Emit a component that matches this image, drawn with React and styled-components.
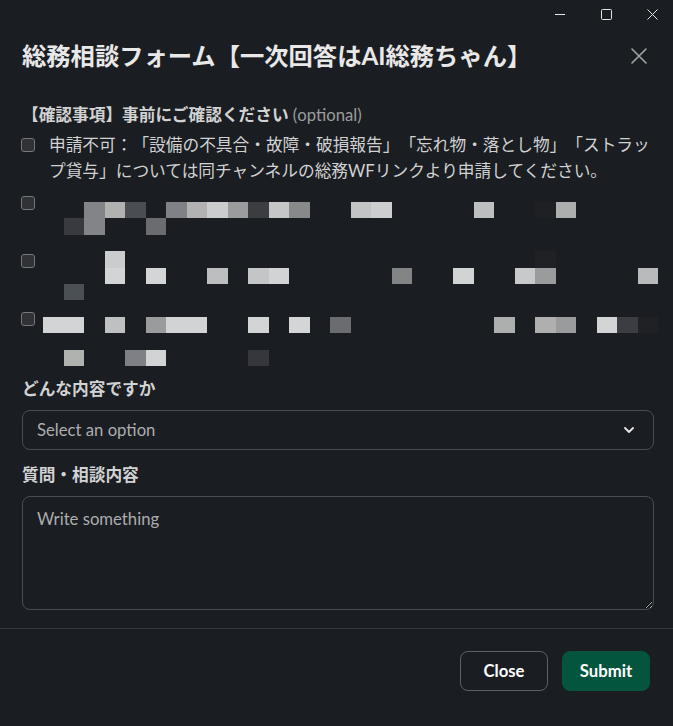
import React from 'react'
import styled, { createGlobalStyle } from 'styled-components'

const GlobalStyle = createGlobalStyle`
  html, body {
    margin: 0;
    padding: 0;
    background: #1a1d21;
  }
  body {
    font-family: Lato, "Noto Sans CJK JP", sans-serif;
    color: #d1d2d3;
    color-scheme: dark;
    text-spacing-trim: space-all;
  }
`

const Window = styled.div`
  width: 673px;
  height: 726px;
  background: #1a1d21;
  overflow: hidden;
`

const TitleBar = styled.div`
  height: 28px;
  display: flex;
  justify-content: flex-end;
  margin-right: -2px;
`

const WinControl = styled.div`
  width: 46px;
  height: 28px;
  display: flex;
  align-items: center;
  justify-content: center;
  color: #e6e6e6;
`

const Body = styled.div`
  padding: 0 19px 0 22px;
`

const Header = styled.div`
  margin-top: 13px;
  height: 30px;
  display: flex;
  align-items: center;
  justify-content: space-between;
`

const Title = styled.h1`
  margin: 0;
  font-size: 24.3px;
  line-height: 30px;
  font-weight: 700;
  color: #e8e8e8;
  white-space: nowrap;
`

const CloseIcon = styled.div`
  width: 16px;
  height: 16px;
  margin-right: 7px;
  color: #a3a4a6;
  display: flex;
`

const Label = styled.div`
  margin-top: ${p => p.$top}px;
  font-size: 16.7px;
  line-height: 26px;
  font-weight: 700;
  color: #d1d2d3;
`

const Optional = styled.span`
  font-weight: 400;
  color: #9b9c9e;
`

const OptionList = styled.div`
  margin-top: 4px;
  display: flex;
  flex-direction: column;
  gap: 6px;
`

const Option = styled.label`
  display: flex;
  align-items: flex-start;
  gap: 14px;
  min-height: 52px;
`

const Box = styled.span`
  flex: none;
  width: 14px;
  height: 14px;
  margin-top: 6px;
  margin-left: -1px;
  box-sizing: border-box;
  border: 1.5px solid #76777a;
  border-radius: 3px;
  background: #313235;
`

const OptionText = styled.span`
  flex: 1;
  margin-right: -4px;
  font-size: 16.7px;
  line-height: 26px;
  color: #d1d2d3;
`

const Mosaic = styled.svg`
  display: block;
  margin-left: -6px;
  overflow: visible;
`

const Select = styled.div`
  margin-top: 8px;
  height: 40px;
  box-sizing: border-box;
  border: 1px solid #4a4c50;
  border-radius: 8px;
  padding: 0 19px 0 14px;
  display: flex;
  align-items: center;
  justify-content: space-between;
  font-size: 16.7px;
  color: #acadaf;
`

const TextArea = styled.textarea`
  display: block;
  margin-top: 8px;
  width: 100%;
  height: 114px;
  box-sizing: border-box;
  border: 1px solid #4a4c50;
  border-radius: 8px;
  background: transparent;
  padding: 9px 14px;
  font-family: Lato, "Noto Sans CJK JP", sans-serif;
  font-size: 16.7px;
  line-height: 26px;
  color: #d1d2d3;
  resize: vertical;
  outline: none;

  &::placeholder {
    color: #acadaf;
  }
`

const Divider = styled.hr`
  margin: 18px 0 0;
  border: 0;
  border-top: 1px solid #35373b;
`

const Footer = styled.div`
  padding: 22px 23px;
  display: flex;
  justify-content: flex-end;
  gap: 14px;
`

const Button = styled.button`
  width: 88px;
  height: 40px;
  box-sizing: border-box;
  border-radius: 8px;
  border: 1px solid ${p => (p.$primary ? '#03553d' : '#5e6064')};
  background: ${p => (p.$primary ? '#03553d' : 'transparent')};
  color: #ffffff;
  font-family: Lato, "Noto Sans CJK JP", sans-serif;
  font-size: 16.7px;
  font-weight: 700;
`

// redacted option labels, pixelated blocks: [y, [col, colour]...]
const mosaics = [
  [
    [12, [2, '#838487'], [3, '#b0b1b0'], [4, '#4a4d51'], [6, '#808186'], [7, '#b1b2b1'], [8, '#cbcccd'], [9, '#9b9c9e'], [10, '#3c3d41'], [11, '#c5c6c7'], [12, '#88898b'], [15, '#c2c3c4'], [16, '#cdcecf'], [21, '#bdbebf'], [24, '#1e2024'], [25, '#adaeae']],
    [28.4, [1, '#393a3f'], [2, '#838487'], [5, '#6b6c70']],
  ],
  [
    [3.2, [3, '#cbcccd'], [24, '#1f2125']],
    [19.6, [3, '#d3d4d5'], [5, '#d4d5d6'], [8, '#bdbebf'], [10, '#c4c5c6'], [11, '#d2d3d4'], [17, '#838486'], [20, '#d2d3d4'], [23, '#c8c9ca'], [24, '#9a9b9d'], [29, '#b9babb']],
    [36, [1, '#4b5054']],
  ],
  [
    [10.8, [0, '#d3d4d5'], [1, '#d3d4d5'], [3, '#bfc0c1'], [5, '#9a9b9c'], [6, '#d2d3d4'], [7, '#d2d3d4'], [10, '#d3d4d5'], [12, '#d4d5d6'], [14, '#6b6c70'], [22, '#adaeae'], [24, '#aeafae'], [25, '#9a9b9d'], [27, '#d3d4d5'], [28, '#3c3d42'], [29, '#1f2125']],
    [43.6, [1, '#b0b2b0'], [4, '#7f8085'], [5, '#d2d3d4'], [10, '#36373c']],
  ],
]

const Pixelated = ({ rows }) => (
  <Mosaic width="620" height="52" shapeRendering="crispEdges">
    {rows.map(([y, ...cells]) =>
      cells.map(([c, fill]) => (
        <rect key={`${y}-${c}`} x={c * 20.5} y={y} width="20.5" height="16.4" fill={fill} />
      ))
    )}
  </Mosaic>
)

const App = () => (
  <Window>
    <GlobalStyle />
    <TitleBar>
      <WinControl>
        <svg width="10" height="10" viewBox="0 0 10 10">
          <path d="M0 5.5h10" stroke="currentColor" strokeWidth="1" />
        </svg>
      </WinControl>
      <WinControl>
        <svg width="11" height="11" viewBox="0 0 11 11">
          <rect x="0.5" y="0.5" width="10" height="10" rx="1" fill="none" stroke="currentColor" strokeWidth="1" />
        </svg>
      </WinControl>
      <WinControl>
        <svg width="11" height="11" viewBox="0 0 11 11">
          <path d="M0.5 0.5l10 10M10.5 0.5l-10 10" stroke="currentColor" strokeWidth="1" />
        </svg>
      </WinControl>
    </TitleBar>
    <Body>
      <Header>
        <Title>総務相談フォーム【一次回答はAI総務ちゃん】</Title>
        <CloseIcon>
          <svg width="16" height="16" viewBox="0 0 16 16">
            <path d="M1 1l14 14M15 1L1 15" stroke="currentColor" strokeWidth="1.6" strokeLinecap="round" />
          </svg>
        </CloseIcon>
      </Header>

      <Label $top={31}>
        【確認事項】事前にご確認ください <Optional>(optional)</Optional>
      </Label>
      <OptionList>
        <Option>
          <Box />
          <OptionText>
            申請不可：「設備の不具合・故障・破損報告」「忘れ物・落とし物」「ストラップ貸与」については同チャンネルの総務WFリンクより申請してください。
          </OptionText>
        </Option>
        {mosaics.map((rows, i) => (
          <Option key={i}>
            <Box />
            <OptionText>
              <Pixelated rows={rows} />
            </OptionText>
          </Option>
        ))}
      </OptionList>

      <Label $top={18}>どんな内容ですか</Label>
      <Select>
        <span>Select an option</span>
        <svg width="10" height="6" viewBox="0 0 10 6">
          <path d="M1 1l4 4 4-4" fill="none" stroke="#e6e6e6" strokeWidth="1.8" strokeLinecap="round" strokeLinejoin="round" />
        </svg>
      </Select>

      <Label $top={12}>質問・相談内容</Label>
      <TextArea placeholder="Write something" />
    </Body>
    <Divider />
    <Footer>
      <Button>Close</Button>
      <Button $primary>Submit</Button>
    </Footer>
  </Window>
)

export default App
